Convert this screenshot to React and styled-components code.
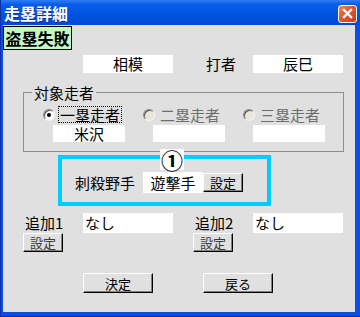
import React from 'react';
import styled, { createGlobalStyle } from 'styled-components';

const Global = createGlobalStyle`
  body {
    margin: 0;
    background: #ffffff;
    font-family: "Noto Sans CJK JP", "Liberation Sans", sans-serif;
  }
`;

const Window = styled.div`
  width: 360px;
  height: 317px;
  box-sizing: border-box;
  display: flex;
  flex-direction: column;
  background: #0a4fe0;
  border-left: 1px solid #0a2fa8;
  border-bottom: 1px solid #0a2fa8;
`;

const TitleBar = styled.div`
  height: 25px;
  flex-shrink: 0;
  display: flex;
  align-items: center;
  justify-content: space-between;
  padding: 0 3px 0 3px;
  background: linear-gradient(#2f7df5 0%, #0a5be8 18%, #0054e3 55%, #0049d4 100%);
`;

const Title = styled.div`
  color: #ffffff;
  font-size: 16px;
  font-weight: bold;
  line-height: 18px;
  text-shadow: 1px 1px #0a2f90;
`;

const CloseButton = styled.div`
  width: 19px;
  height: 18px;
  box-sizing: border-box;
  margin-top: 2px;
  border: 1px solid #ffffff;
  border-radius: 3px;
  background: linear-gradient(135deg, #f08a5a 0%, #e0552c 45%, #c8401c 100%);
  display: flex;
  align-items: center;
  justify-content: center;
`;

const Body = styled.div`
  flex: 1;
  margin: 0 5px 4px 2px;
  background: #e0e0e0;
  display: flex;
  flex-direction: column;
  align-items: flex-start;
`;

const Badge = styled.div`
  margin-top: 1px;
  height: 24px;
  width: 69px;
  box-sizing: border-box;
  border: 1px solid #000000;
  background: #c6f8c6;
  font-size: 16px;
  font-weight: bold;
  line-height: 22px;
  text-align: center;
  color: #000000;
`;

const Row = styled.div`
  display: flex;
  align-items: center;
  margin-top: ${(p) => p.$top || 0}px;
  padding-left: ${(p) => p.$left || 0}px;
`;

const Field = styled.div`
  width: ${(p) => p.$w}px;
  height: ${(p) => p.$h || 18}px;
  margin-left: ${(p) => p.$ml || 0}px;
  background: #ffffff;
  font-size: 15px;
  line-height: ${(p) => p.$h || 18}px;
  text-align: ${(p) => p.$align || 'center'};
  padding-left: ${(p) => (p.$align === 'left' ? 2 : 0)}px;
  box-sizing: border-box;
  color: #000000;
  white-space: nowrap;
`;

const Label = styled.div`
  width: ${(p) => p.$w}px;
  margin-left: ${(p) => p.$ml || 0}px;
  padding-left: ${(p) => p.$pl || 0}px;
  box-sizing: border-box;
  font-size: 15px;
  line-height: 18px;
  color: #000000;
  white-space: nowrap;
`;

const Group = styled.fieldset`
  margin: 12px 0 0 20px;
  width: 320px;
  box-sizing: border-box;
  padding: 6px 0 9px 8px;
  border: 1px solid #8e8e8e;
  border-radius: 0;
`;

const Legend = styled.legend`
  padding: 0 2px;
  font-size: 15px;
  line-height: 15px;
  color: #000000;
`;

const RadioGrid = styled.div`
  display: grid;
  grid-template-columns: repeat(3, 100px);
  padding-left: 11px;
`;

const RadioCol = styled.div`
  display: flex;
  flex-direction: column;
`;

const RadioLine = styled.div`
  display: flex;
  align-items: center;
  height: 17px;
`;

const RadioDot = styled.span`
  width: 12px;
  height: 12px;
  box-sizing: border-box;
  border-radius: 50%;
  border: 1px solid;
  border-color: #8a8a8a #f4f4f4 #f4f4f4 #8a8a8a;
  box-shadow: inset 1px 1px 0 #5a5a5a;
  background: ${(p) => (p.$disabled ? '#e9e6da' : '#ffffff')};
  display: flex;
  align-items: center;
  justify-content: center;
  flex-shrink: 0;
  &::after {
    content: '';
    width: 4px;
    height: 4px;
    border-radius: 50%;
    background: ${(p) => (p.$checked ? '#000000' : 'transparent')};
  }
`;

const RadioText = styled.span`
  margin-left: 3px;
  padding: 0 1px;
  height: 17px;
  box-sizing: border-box;
  display: flex;
  align-items: center;
  font-size: 15px;
  line-height: 15px;
  color: ${(p) => (p.$disabled ? '#6e6e6e' : '#000000')};
  border: 1px dotted ${(p) => (p.$focus ? '#000000' : 'transparent')};
  white-space: nowrap;
`;

const RunnerField = styled(Field)`
  margin-top: 2px;
  margin-left: 10px;
`;

const Highlight = styled.div`
  position: relative;
  margin: 3px 0 0 55px;
  width: 213px;
  height: 51px;
  box-sizing: border-box;
  border: 4px solid #00ccff;
  display: flex;
  align-items: center;
  padding: 4px 0 0 13px;
`;

const Marker = styled.div`
  position: absolute;
  left: 98px;
  top: -10px;
  width: 24px;
  height: 21px;
  background: #ffffff;
  font-size: 22px;
  font-weight: bold;
  line-height: 21px;
  text-align: center;
  color: #000000;
`;

const Button = styled.button`
  width: ${(p) => p.$w}px;
  height: ${(p) => p.$h || 19}px;
  margin-left: ${(p) => p.$ml || 0}px;
  padding: 0;
  box-sizing: border-box;
  background: #e0e0e0;
  border: 1px solid;
  border-color: #ffffff #000000 #000000 #ffffff;
  box-shadow: inset -1px -1px 0 #808080;
  font-family: "Noto Sans CJK JP", sans-serif;
  font-size: 13px;
  line-height: 15px;
  color: ${(p) => p.$tone || '#000000'};
`;

const ExtraRow = styled.div`
  display: grid;
  grid-template-columns: 170px 160px;
  margin: 7px 0 0 20px;
`;

const ExtraCell = styled.div`
  display: grid;
  grid-template-columns: 60px 90px;
  grid-template-rows: 20px 19px;
  align-items: center;
`;

const Footer = styled.div`
  display: flex;
  gap: 50px;
  margin: 21px 0 0 80px;
`;

function Extra({ name }) {
  return (
    <ExtraCell>
      <Label $w={60} $pl={2}>{name}</Label>
      <Field $w={90} $h={20} $align="left">なし</Field>
      <Button $w={40} $tone="#3a3a3a">設定</Button>
    </ExtraCell>
  );
}

const runners = [
  { label: '一塁走者', name: '米沢', checked: true },
  { label: '二塁走者', name: '', disabled: true },
  { label: '三塁走者', name: '', disabled: true },
];

export default function App() {
  return (
    <>
      <Global />
      <Window>
        <TitleBar>
          <Title>走塁詳細</Title>
          <CloseButton>
            <svg width="11" height="11" viewBox="0 0 11 11">
              <path d="M2 2 L9 9 M9 2 L2 9" stroke="#ffffff" strokeWidth="2.4" strokeLinecap="square" />
            </svg>
          </CloseButton>
        </TitleBar>
        <Body>
          <Badge>盗塁失敗</Badge>
          <Row $top={5} $left={80}>
            <Field $w={90}>相模</Field>
            <Label $w={47} $ml={33}>打者</Label>
            <Field $w={90}>辰巳</Field>
          </Row>
          <Group>
            <Legend>対象走者</Legend>
            <RadioGrid>
              {runners.map((r) => (
                <RadioCol key={r.label}>
                  <RadioLine>
                    <RadioDot $checked={r.checked} $disabled={r.disabled} />
                    <RadioText $focus={r.checked} $disabled={r.disabled}>{r.label}</RadioText>
                  </RadioLine>
                  <RunnerField $w={72} $h={17}>{r.name}</RunnerField>
                </RadioCol>
              ))}
            </RadioGrid>
          </Group>
          <Highlight>
            <Marker>①</Marker>
            <Label $w={68}>刺殺野手</Label>
            <Field $w={60} $h={21}>遊撃手</Field>
            <Button $w={40}>設定</Button>
          </Highlight>
          <ExtraRow>
            <Extra name="追加1" />
            <Extra name="追加2" />
          </ExtraRow>
          <Footer>
            <Button $w={70} $h={20}>決定</Button>
            <Button $w={70} $h={20}>戻る</Button>
          </Footer>
        </Body>
      </Window>
    </>
  );
}
